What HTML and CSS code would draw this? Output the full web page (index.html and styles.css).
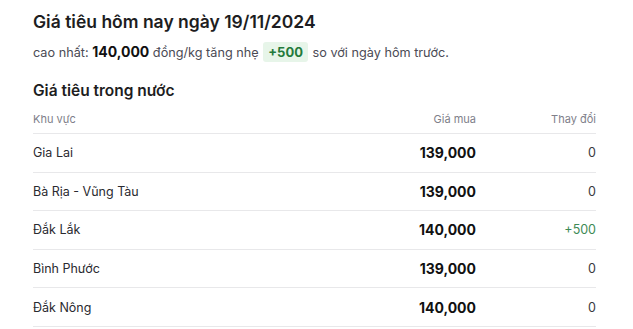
FILE: index.html
```html
<!DOCTYPE html>
<html lang="vi">
<head>
<meta charset="utf-8">
<link rel="stylesheet" href="styles.css">
</head>
<body>
<main class="page">
  <h1 class="title">Giá tiêu hôm nay ngày 19/11/2024</h1>
  <p class="summary">cao nhất: <strong class="top">140,000</strong> đồng/kg tăng nhẹ <span class="badge">+500</span> so với ngày hôm trước.</p>
  <h2 class="section">Giá tiêu trong nước</h2>
  <table class="prices">
    <thead>
      <tr><th class="c-region">Khu vực</th><th class="c-price">Giá mua</th><th class="c-change">Thay đổi</th></tr>
    </thead>
    <tbody>
      <tr><td class="c-region">Gia Lai</td><td class="c-price">139,000</td><td class="c-change">0</td></tr>
      <tr><td class="c-region">Bà Rịa - Vũng Tàu</td><td class="c-price">139,000</td><td class="c-change">0</td></tr>
      <tr><td class="c-region">Đắk Lắk</td><td class="c-price">140,000</td><td class="c-change up">+500</td></tr>
      <tr><td class="c-region">Bình Phước</td><td class="c-price">139,000</td><td class="c-change">0</td></tr>
      <tr><td class="c-region">Đắk Nông</td><td class="c-price">140,000</td><td class="c-change">0</td></tr>
    </tbody>
  </table>
</main>
</body>
</html>
```

FILE: styles.css
```css
html, body { margin: 0; padding: 0; background: #fff; }
body {
  font-family: Inter, "Noto Sans", "Liberation Sans", sans-serif;
  color: #1f1f23;
}
.page {
  width: 563px;
  padding: 9px 0 0 33px;
}
.title {
  margin: 0;
  font-size: 17.5px;
  line-height: 26px;
  font-weight: 600;
  color: #1d1d21;
}
.summary {
  margin: 6px 0 0;
  font-size: 12.7px;
  line-height: 22px;
  color: #4b4b55;
}
.top {
  font-size: 14px;
  font-weight: 700;
  color: #111;
}
.badge {
  display: inline-block;
  padding: 0 5px;
  margin: 0 1px;
  background: #e7f5e9;
  color: #237a3b;
  font-weight: 700;
  font-size: 13px;
  border-radius: 3px;
  line-height: 20px;
}
.section {
  margin: 15px 0 0;
  font-size: 15.5px;
  line-height: 24px;
  font-weight: 600;
  color: #1d1d21;
}
.prices {
  width: 100%;
  border-collapse: collapse;
  margin-top: 2px;
}
.prices th {
  font-size: 11px;
  font-weight: 400;
  color: #80808a;
  height: 28px;
  padding: 0;
  border-bottom: 1px solid #e8e8ea;
  vertical-align: middle;
}
.prices td {
  font-size: 12.5px;
  height: 37.6px;
  padding: 0;
  border-bottom: 1px solid #e8e8ea;
  color: #2a2a30;
  vertical-align: middle;
}
.c-region { text-align: left; }
.c-price { text-align: right; width: 200px; }
.c-change { text-align: right; width: 120px; }
td.c-price { font-weight: 700; font-size: 14px; color: #111; }
td.c-change { color: #3a3a40; }
td.up { color: #3e8a55; }
```
